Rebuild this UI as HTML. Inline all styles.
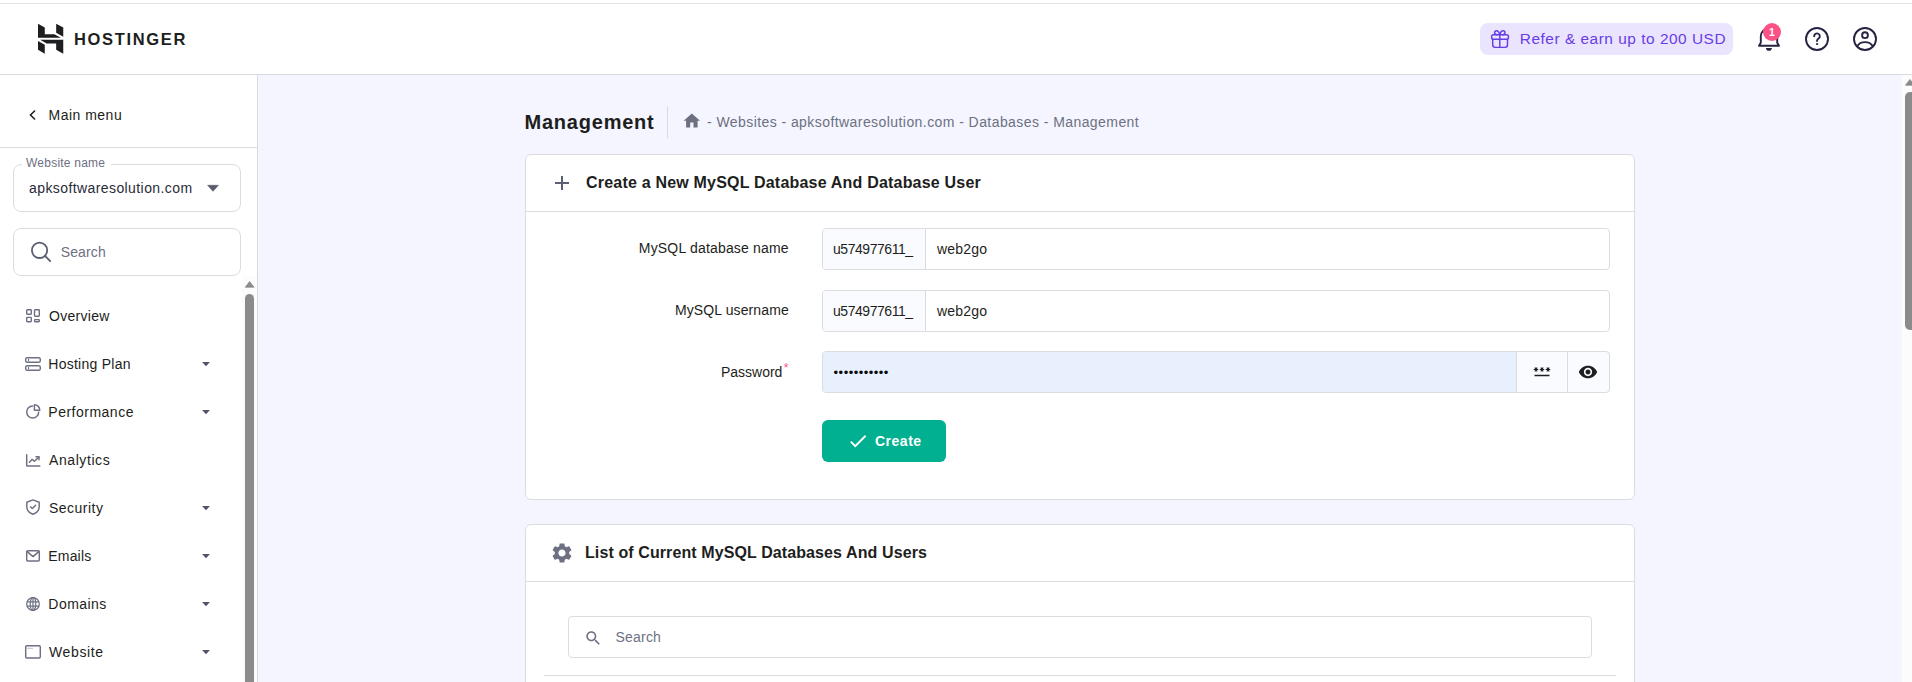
<!DOCTYPE html>
<html lang="en">
<head>
<meta charset="utf-8">
<title>Management - Databases</title>
<style>
*{box-sizing:border-box;margin:0;padding:0}
html,body{width:1912px;height:682px;overflow:hidden;background:#fff}
body{position:relative;font-family:"Liberation Sans",sans-serif;color:#1d1e20;font-size:14px}
.abs{position:absolute}
.t{position:absolute;white-space:nowrap;line-height:20px;height:20px}
svg{position:absolute;overflow:visible}
#topline{left:0;top:3px;width:1912px;height:1px;background:#e3e5e3}
#header{left:0;top:4px;width:1912px;height:71px;background:#fff;border-bottom:1px solid #d8dae0}
#sidebar{left:0;top:75px;width:258px;height:607px;background:#fff;border-right:1px solid #d8dae0}
#main{left:258px;top:75px;width:1654px;height:607px;background:#f4f5ff}
.card{position:absolute;background:#fff;border:1px solid #dadce0;border-radius:6px}
.hline{position:absolute;height:1px;background:#dadce0}
.vline{position:absolute;width:1px;background:#dadce0}
.box{position:absolute;background:#fff;border:1px solid #dadce0;border-radius:4px}
.mi{color:#1d1e20;font-size:14px}
.gray{color:#6d7081}
</style>
</head>
<body>
<div id="topline" class="abs"></div>
<div id="header" class="abs"></div>
<div id="sidebar" class="abs"></div>
<div id="main" class="abs"></div>

<!-- HEADER -->
<svg id="logo" style="left:0;top:0" width="70" height="60" viewBox="0 0 70 60">
 <g fill="#1d1e20">
  <path d="M38 23.85 L44.78 27.54 L44.78 34.13 L54.32 34.13 L60.79 37.83 L38 37.83 Z"/>
  <path d="M56.17 23.85 L63.25 27.54 L63.25 36.78 L56.17 32.78 Z"/>
  <path d="M40.16 39.86 L63.25 39.86 L63.25 53.71 L56.17 49.71 L56.17 43.55 L46.63 43.55 Z"/>
  <path d="M38 40.9 L44.78 44.79 L44.78 53.71 L38 49.71 Z"/>
 </g>
</svg>
<div class="t" id="brand" style="left:73.9px;top:29px;font-size:16.5px;font-weight:700;color:#1d1e20;letter-spacing:1.67px">HOSTINGER</div>

<div class="abs" id="refer" style="left:1480px;top:23px;width:253px;height:32px;background:#ebe4ff;border-radius:8px"></div>
<svg id="gift" style="left:1491px;top:30px" width="18" height="18" viewBox="0 0 18 18" fill="none" stroke="#673de6" stroke-width="1.45" stroke-linejoin="round" stroke-linecap="round">
 <rect x="0.650" y="4.700" width="16.800" height="4.600" rx="1.900"/>
 <path d="M1.700 9.300 V14.850 a2.500 2.500 0 0 0 2.500 2.500 H14 a2.500 2.500 0 0 0 2.500 -2.500 V9.300"/>
 <path d="M8.800 4.700 V17.350"/>
 <path d="M8.800 4.700 C8.200 2.600 7.100 0.750 5.500 0.750 C4.300 0.750 3.600 1.600 3.600 2.600 C3.600 3.900 4.700 4.700 6 4.700"/>
 <path d="M8.800 4.700 C9.400 2.600 10.500 0.750 12.100 0.750 C13.300 0.750 14 1.600 14 2.600 C14 3.900 12.900 4.700 11.600 4.700"/>
</svg>
<div class="t" id="refertxt" style="left:1519.8px;top:28.6px;font-size:15.4px;color:#673de6;letter-spacing:0.53px">Refer &amp; earn up to 200 USD</div>

<svg id="bell" style="left:1756px;top:26px" width="26" height="28" viewBox="0 0 26 28" fill="none" stroke="#262342" stroke-width="1.9" stroke-linejoin="round" stroke-linecap="round">
 <path d="M3 19.8 H23 L21.2 16.8 V10.5 A8.2 8.2 0 0 0 4.800 10.500 V16.8 Z"/>
 <path d="M9.800 21.900 H16 C15.600 23.800 14.400 24.800 12.900 24.800 C11.400 24.800 10.200 23.800 9.800 21.900 Z" fill="#262342" stroke="none"/>
</svg>
<div class="abs" id="badge" style="left:1763px;top:23px;width:18px;height:18px;border-radius:9px;background:#fc5185"></div>
<div class="t" id="badgetxt" style="left:1763px;top:23px;width:18px;height:18px;line-height:18px;text-align:center;font-size:10.5px;font-weight:700;color:#fff">1</div>

<svg id="help" style="left:1804px;top:26px" width="26" height="26" viewBox="0 0 26 26" fill="none" stroke="#262342" stroke-width="1.9" stroke-linecap="round" stroke-linejoin="round">
 <circle cx="13" cy="13" r="11"/>
 <path d="M10.2 10.2 A2.8 2.8 0 1 1 14.600 12.500 C13.400 13.300 13 13.800 13 15"/>
 <circle cx="13" cy="18" r="0.6" fill="#262342" stroke-width="1"/>
</svg>
<svg id="user" style="left:1852px;top:26px" width="26" height="26" viewBox="0 0 26 26" fill="none" stroke="#262342" stroke-width="1.9" stroke-linecap="round" stroke-linejoin="round">
 <circle cx="13" cy="13" r="11"/>
 <circle cx="13" cy="9.200" r="2.900"/>
 <path d="M5.400 20 C7 17.300 9.800 16.100 13 16.100 C16.200 16.100 19 17.300 20.600 20"/>
</svg>

<!-- SIDEBAR -->
<svg id="chev" style="left:28px;top:108px" width="10" height="14" viewBox="0 0 10 14" fill="none" stroke="#1d1e20" stroke-width="1.6" stroke-linecap="round" stroke-linejoin="round">
 <path d="M6.600 3 L2.400 7 L6.600 11"/>
</svg>
<div class="t mi" id="mainmenu" style="left:48.5px;top:105px;letter-spacing:0.49px">Main menu</div>
<div class="hline" style="left:0;top:147px;width:257px"></div>

<div class="box" id="wsbox" style="left:13px;top:164px;width:228px;height:48px;border-radius:8px"></div>
<div class="abs" style="left:22px;top:160px;width:89px;height:10px;background:#fff"></div>
<div class="t gray" id="wsname" style="left:26px;top:153px;font-size:12px;letter-spacing:0.23px">Website name</div>
<div class="t mi" id="wsval" style="left:29px;top:178.1px;font-size:14px;color:#2a2b38;letter-spacing:0.41px">apksoftwaresolution.com</div>
<svg style="left:207px;top:185px" width="12" height="7" viewBox="0 0 12 7"><path d="M0.600 0.300 H11.400 L6 6.300 Z" fill="#5a5c6e" stroke="#5a5c6e" stroke-width="0.6" stroke-linejoin="round"/></svg>

<div class="box" id="sbox" style="left:13px;top:228px;width:228px;height:48px;border-radius:8px"></div>
<svg id="sicon" style="left:30px;top:242px" width="22" height="22" viewBox="0 0 22 22" fill="none" stroke="#5a5c6f" stroke-width="1.8" stroke-linecap="round">
 <circle cx="9.570" cy="8.370" r="7.650"/><path d="M15 13.800 L20.200 19.100"/>
</svg>
<div class="t gray" id="ssearch" style="left:60.7px;top:242.4px;font-size:14px;letter-spacing:0.15px">Search</div>

<!-- sidebar scrollbar -->
<div class="abs" style="left:242px;top:276px;width:15px;height:406px;background:#fcfcfc"></div>
<svg style="left:245px;top:281px" width="10" height="7" viewBox="0 0 10 7"><path d="M4.600 0.500 L9 6.200 H0.300 Z" fill="#8b8b8b" stroke="#8b8b8b" stroke-width="0.8" stroke-linejoin="round"/></svg>
<div class="abs" style="left:245px;top:294px;width:9px;height:400px;border-radius:4.5px;background:#8b8b8b"></div>

<!-- MENU -->

<!-- Overview -->
<svg style="left:26px;top:309px" width="14" height="14" viewBox="0 0 14 14" fill="none" stroke="#6d7081" stroke-width="1.4" stroke-linejoin="round">
 <rect x="0.700" y="0.700" width="4.600" height="4.600" rx="0.700"/><rect x="8.500" y="0.700" width="4.800" height="6.500" rx="0.700"/>
 <rect x="0.700" y="8.400" width="4.600" height="4.400" rx="0.700"/><rect x="8.500" y="10.600" width="4.800" height="2.200" rx="0.700"/>
</svg>
<div class="t mi" id="m1" style="left:49px;top:306.4px;letter-spacing:0.3px">Overview</div>
<!-- Hosting Plan -->
<svg style="left:25px;top:357px" width="16" height="14" viewBox="0 0 16 14" fill="none" stroke="#6d7081" stroke-width="1.45" stroke-linejoin="round" stroke-linecap="round">
 <rect x="0.700" y="0.700" width="14.600" height="4.600" rx="1.600"/><rect x="0.700" y="8.700" width="14.600" height="4.600" rx="1.600"/>
 <path d="M3.600 2.200 V3.800 M3.600 10.200 V11.800" stroke-width="1.100"/>
</svg>
<div class="t mi" id="m2" style="left:48.3px;top:354.4px;letter-spacing:0.26px">Hosting Plan</div>
<!-- Performance -->
<svg style="left:26px;top:404px" width="15" height="15" viewBox="0 0 15 15" fill="none" stroke="#6d7081" stroke-width="1.450" stroke-linejoin="round" stroke-linecap="round">
 <path d="M6.600 2 A6 6 0 1 0 12.700 8.100"/>
 <path d="M8.400 0.800 A5.400 5.400 0 0 1 13.800 6.200 H8.400 Z"/>
</svg>
<div class="t mi" id="m3" style="left:48.3px;top:402.4px;letter-spacing:0.5px">Performance</div>
<!-- Analytics -->
<svg style="left:26px;top:454px" width="15" height="13" viewBox="0 0 15 13" fill="none" stroke="#6d7081" stroke-width="1.450" stroke-linejoin="round" stroke-linecap="round">
 <path d="M0.700 0.700 V11.200 a0.800 0.800 0 0 0 0.800 0.800 H13.800"/>
 <path d="M3.400 8.200 L6 5.400 L8.400 7.200 L12.800 3"/>
 <path d="M10 2.800 H13 V5.800"/>
</svg>
<div class="t mi" id="m4" style="left:49px;top:450.4px;letter-spacing:0.58px">Analytics</div>
<!-- Security -->
<svg style="left:26px;top:499px" width="14" height="16" viewBox="0 0 14 16" fill="none" stroke="#6d7081" stroke-width="1.450" stroke-linejoin="round" stroke-linecap="round">
 <path d="M7 0.900 L13.200 3.200 V7.600 C13.200 11.200 10.600 14 7 15.200 C3.400 14 0.800 11.200 0.800 7.600 V3.200 Z"/>
 <path d="M4.600 7.900 L6.300 9.500 L9.600 6.200"/>
</svg>
<div class="t mi" id="m5" style="left:49px;top:498.4px;letter-spacing:0.49px">Security</div>
<!-- Emails -->
<svg style="left:26px;top:550px" width="14" height="12" viewBox="0 0 14 12" fill="none" stroke="#6d7081" stroke-width="1.450" stroke-linejoin="round" stroke-linecap="round">
 <rect x="0.700" y="0.700" width="12.600" height="10.200" rx="1"/>
 <path d="M1.200 1.600 L7 6.600 L12.800 1.600"/>
</svg>
<div class="t mi" id="m6" style="left:48.3px;top:546.4px;letter-spacing:0.18px">Emails</div>
<!-- Domains -->
<svg style="left:26px;top:597px" width="14" height="14" viewBox="0 0 14 14" fill="none" stroke="#6d7081" stroke-width="1.200" stroke-linejoin="round" stroke-linecap="round">
 <circle cx="7" cy="7" r="6.300"/>
 <ellipse cx="7" cy="7" rx="2.800" ry="6.300"/>
 <path d="M7 0.700 V13.300 M1.200 4.800 H12.800 M1.200 9.200 H12.800"/>
</svg>
<div class="t mi" id="m7" style="left:48.3px;top:594.4px;letter-spacing:0.47px">Domains</div>
<!-- Website -->
<svg style="left:25px;top:645px" width="16" height="14" viewBox="0 0 16 14" fill="none" stroke="#6d7081" stroke-width="1.450" stroke-linejoin="round" stroke-linecap="round">
 <rect x="0.700" y="0.700" width="14.600" height="12.300" rx="1.200"/>
 <path d="M3 3.300 H3.100 M5 3.300 H5.100 M7 3.300 H7.100" stroke-width="1"/>
</svg>
<div class="t mi" id="m8" style="left:49px;top:642.4px;letter-spacing:0.63px">Website</div>
<svg style="left:202px;top:361.9px" width="8" height="5" viewBox="0 0 8 5"><path d="M0.100 0 H7.900 L4 4.200 Z" fill="#4f5268"/></svg>
<svg style="left:202px;top:409.9px" width="8" height="5" viewBox="0 0 8 5"><path d="M0.100 0 H7.900 L4 4.200 Z" fill="#4f5268"/></svg>
<svg style="left:202px;top:505.9px" width="8" height="5" viewBox="0 0 8 5"><path d="M0.100 0 H7.900 L4 4.200 Z" fill="#4f5268"/></svg>
<svg style="left:202px;top:553.9px" width="8" height="5" viewBox="0 0 8 5"><path d="M0.100 0 H7.900 L4 4.200 Z" fill="#4f5268"/></svg>
<svg style="left:202px;top:601.9px" width="8" height="5" viewBox="0 0 8 5"><path d="M0.100 0 H7.900 L4 4.200 Z" fill="#4f5268"/></svg>
<svg style="left:202px;top:649.9px" width="8" height="5" viewBox="0 0 8 5"><path d="M0.100 0 H7.900 L4 4.200 Z" fill="#4f5268"/></svg>

<!-- TITLE / BREADCRUMB -->
<div class="t" id="title" style="left:524.5px;top:108px;height:28px;line-height:28px;font-size:20px;font-weight:700;color:#1d1e20;letter-spacing:0.78px">Management</div>
<div class="vline" style="left:667px;top:106px;height:32px;background:#d8dae0"></div>
<svg id="home" style="left:682.2px;top:111.1px" width="19.7" height="19.7" viewBox="0 0 24 24"><path d="M10 20v-6h4v6h5v-8h3L12 3 2 12h3v8z" fill="#6d7081"/></svg>
<div class="t gray" id="crumb" style="left:707px;top:112px;font-size:14px;letter-spacing:0.43px">- Websites - apksoftwaresolution.com - Databases - Management</div>

<!-- CARD 1 -->
<div class="card" id="card1" style="left:525px;top:154px;width:1110px;height:346px"></div>
<div class="hline" style="left:526px;top:211px;width:1108px"></div>
<svg id="plus" style="left:555px;top:176px" width="14" height="14" viewBox="0 0 14 14" fill="none" stroke="#5d5f73" stroke-width="2"><path d="M7 0 V14 M0 7 H14"/></svg>
<div class="t" id="c1title" style="left:586px;top:173px;font-size:16px;font-weight:700;letter-spacing:0.2px">Create a New MySQL Database And Database User</div>

<div class="t" id="l1" style="right:1123.2px;top:238px;font-size:14px;letter-spacing:0.18px">MySQL database name</div>
<div class="box" id="in1" style="left:822px;top:228px;width:788px;height:42px"></div>
<div class="abs" style="left:823px;top:229px;width:103px;height:40px;background:#fafbff;border-right:1px solid #dadce0;border-radius:3px 0 0 3px"></div>
<div class="t" id="p1" style="left:833px;top:239px;font-size:14px;letter-spacing:-0.45px">u574977611_</div>
<div class="t" id="v1" style="left:937px;top:239px;font-size:14px;letter-spacing:0.22px">web2go</div>

<div class="t" id="l2" style="right:1123.2px;top:300px;font-size:14px;letter-spacing:0.11px">MySQL username</div>
<div class="box" id="in2" style="left:822px;top:290px;width:788px;height:42px"></div>
<div class="abs" style="left:823px;top:291px;width:103px;height:40px;background:#fafbff;border-right:1px solid #dadce0;border-radius:3px 0 0 3px"></div>
<div class="t" id="p2" style="left:833px;top:301px;font-size:14px;letter-spacing:-0.45px">u574977611_</div>
<div class="t" id="v2" style="left:937px;top:301px;font-size:14px;letter-spacing:0.22px">web2go</div>

<div class="t" id="l3" style="right:1129.6px;top:362px;font-size:14px">Password</div>
<div class="t" id="ast" style="left:783.8px;top:357.5px;font-size:12px;color:#fc5185">*</div>
<div class="box" id="in3" style="left:822px;top:351px;width:788px;height:42px;background:#fafbff"></div>
<div class="abs" style="left:823px;top:352px;width:693px;height:40px;background:#e8f0fe;border-radius:3px 0 0 3px"></div>
<div class="vline" style="left:1516px;top:352px;height:40px"></div>
<div class="vline" style="left:1567px;top:352px;height:40px"></div>
<div class="t" id="dots" style="left:833.6px;top:363.4px;font-size:13px;color:#0b0b0c;letter-spacing:0.47px">&#8226;&#8226;&#8226;&#8226;&#8226;&#8226;&#8226;&#8226;&#8226;&#8226;&#8226;</div>
<svg id="pwicon" style="left:1533px;top:362px" width="18" height="18" viewBox="0 0 24 24"><path fill="#1d1e20" d="M2 17h20v2H2v-2zm1.150-4.050L4 11.470l.850 1.480 1.300-.750-.850-1.480H7v-1.500H5.300l.850-1.470L4.850 7 4 8.470 3.150 7l-1.300.750.850 1.470H1v1.500h1.700l-.850 1.480 1.300.750zm6.700-.750 1.300.750.850-1.480.850 1.480 1.300-.750-.850-1.480H15v-1.500h-1.700l.850-1.470-1.300-.750L12 8.470 11.150 7l-1.300.750.850 1.470H9v1.500h1.700l-.850 1.480zM23 9.220h-1.700l.850-1.470-1.300-.750L20 8.470 19.150 7l-1.300.750.850 1.470H17v1.500h1.700l-.850 1.480 1.300.750.850-1.480.850 1.480 1.300-.750-.850-1.480H23v-1.500z"/></svg>
<svg id="eye" style="left:1578px;top:362px" width="20" height="20" viewBox="0 0 24 24"><path fill="#1d1e20" d="M12 4.500C7 4.500 2.730 7.610 1 12c1.730 4.390 6 7.500 11 7.500s9.270-3.110 11-7.500c-1.730-4.390-6-7.500-11-7.500zM12 17c-2.760 0-5-2.240-5-5s2.240-5 5-5 5 2.240 5 5-2.240 5-5 5zm0-8c-1.660 0-3 1.340-3 3s1.340 3 3 3 3-1.340 3-3-1.340-3-3-3z"/></svg>

<div class="abs" id="btn" style="left:822px;top:420px;width:124px;height:42px;border-radius:6px;background:#00b090"></div>
<svg id="check" style="left:847.1px;top:430.1px" width="22" height="22" viewBox="0 0 24 24"><path d="M9 16.170L4.830 12l-1.420 1.410L9 19 21 7l-1.410-1.410z" fill="#fff"/></svg>
<div class="t" id="create" style="left:875px;top:431px;font-size:14px;font-weight:700;color:#fff;letter-spacing:0.5px">Create</div>

<!-- CARD 2 -->
<div class="card" id="card2" style="left:525px;top:524px;width:1110px;height:200px"></div>
<div class="hline" style="left:526px;top:581px;width:1108px"></div>
<svg id="gear" style="left:549.5px;top:541px" width="24" height="24" viewBox="0 0 24 24"><path fill="#6d7081" d="M19.140 12.940c.040-.300.060-.610.060-.940 0-.320-.020-.640-.070-.940l2.030-1.580c.180-.140.230-.410.120-.610l-1.920-3.320c-.120-.220-.370-.290-.590-.220l-2.390.960c-.500-.380-1.030-.700-1.620-.940l-.360-2.540c-.040-.240-.240-.410-.480-.410h-3.840c-.240 0-.430.170-.470.410l-.360 2.540c-.590.240-1.130.570-1.620.940l-2.390-.960c-.220-.080-.470 0-.590.220L2.740 8.870c-.120.210-.080.470.120.610l2.030 1.580c-.050.300-.090.630-.090.940s.020.640.070.940l-2.030 1.580c-.180.140-.230.410-.120.610l1.920 3.320c.120.220.370.290.590.220l2.390-.960c.500.380 1.030.700 1.620.940l.360 2.540c.050.240.240.410.480.410h3.840c.240 0 .440-.170.470-.410l.360-2.540c.590-.240 1.130-.560 1.620-.940l2.390.960c.220.080.470 0 .590-.220l1.920-3.320c.120-.220.070-.470-.120-.610l-2.010-1.580zM12 15.600c-1.980 0-3.600-1.620-3.600-3.600s1.620-3.600 3.600-3.600 3.600 1.620 3.600 3.600-1.620 3.600-3.600 3.600z"/></svg>
<div class="t" id="c2title" style="left:585px;top:543px;font-size:16px;font-weight:700;letter-spacing:0.1px">List of Current MySQL Databases And Users</div>

<div class="box" id="srch2" style="left:568px;top:616px;width:1024px;height:42px"></div>
<svg id="sicon2" style="left:583.8px;top:628.7px" width="18.5" height="18.5" viewBox="0 0 24 24"><path fill="#6d7081" d="M15.500 14h-.790l-.280-.270C15.410 12.590 16 11.110 16 9.500 16 5.910 13.090 3 9.500 3S3 5.910 3 9.500 5.910 16 9.500 16c1.610 0 3.090-.590 4.230-1.570l.270.280v.790l5 4.990L20.490 19l-4.990-5zm-6 0C7.010 14 5 11.990 5 9.500S7.010 5 9.500 5 14 7.010 14 9.500 11.990 14 9.500 14z"/></svg>
<div class="t gray" id="stxt2" style="left:615.6px;top:627px;font-size:14px;letter-spacing:0.18px">Search</div>
<div class="hline" style="left:544px;top:675px;width:1072px"></div>



<!-- MAIN scrollbar -->
<div class="abs" style="left:1902px;top:75px;width:10px;height:607px;background:#fcfcfc"></div>
<svg style="left:1905px;top:79px" width="10" height="7" viewBox="0 0 10 7"><path d="M4.900 0.500 L9.500 6.200 H0.500 Z" fill="#8b8b8b" stroke="#8b8b8b" stroke-width="0.8" stroke-linejoin="round"/></svg>
<div class="abs" style="left:1905px;top:92px;width:12px;height:237.500px;border-radius:5px;background:#8b8b8b"></div>

</body>
</html>
